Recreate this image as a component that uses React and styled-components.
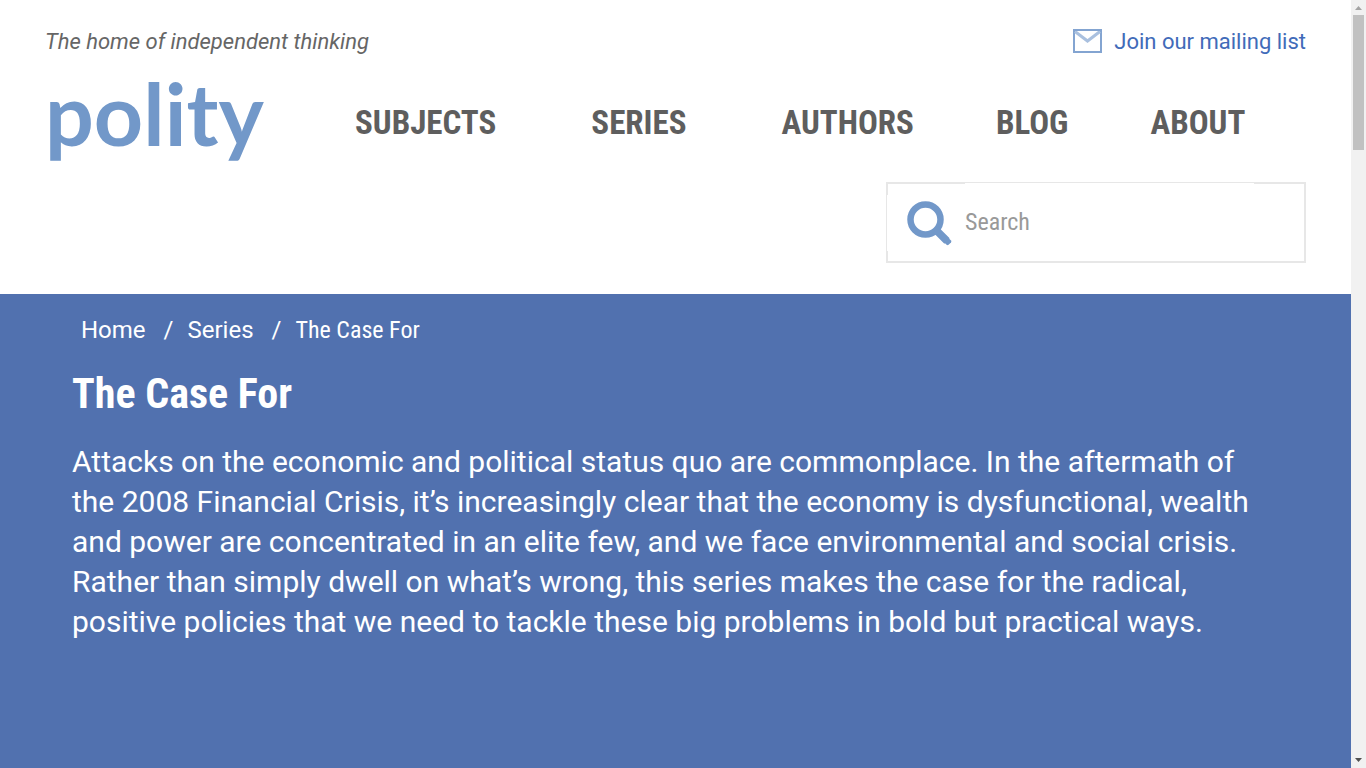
import React, { useState } from 'react';
import styled, { createGlobalStyle } from 'styled-components';

const GlobalStyle = createGlobalStyle`
  * {
    box-sizing: border-box;
  }

  body {
    margin: 0;
    background-color: white;
    font-family: Roboto, 'Liberation Sans', sans-serif;
  }
`;

const condensed = "'Roboto Condensed', Roboto, 'Liberation Sans', sans-serif";

const Window = styled.div`
  display: grid;
  grid-template-columns: minmax(0, 1fr) 15px;
  height: 100vh;
`;

const Page = styled.div`
  display: flex;
  flex-direction: column;
  overflow-y: auto;
  scrollbar-width: none;
`;

const Header = styled.header`
  padding: 24px 45px 31px;
`;

const TopBar = styled.div`
  display: flex;
  align-items: center;
  justify-content: space-between;
  height: 34px;
  font-size: 22px;
`;

const Tagline = styled.em`
  color: #666;
`;

const MailLink = styled.a`
  display: flex;
  align-items: center;
  gap: 12px;
  color: #416bb9;
  text-decoration: none;
`;

const MainBar = styled.div`
  display: flex;
  align-items: center;
  height: 124px;
`;

const Logo = styled.a`
  flex: none;
  width: 310px;
  padding-bottom: 14px;
  color: #7298c9;
  font-family: Lato, 'Open Sans', sans-serif;
  font-size: 86px;
  font-weight: 700;
  line-height: 110px;
  text-decoration: none;
`;

const Nav = styled.nav`
  display: flex;
  padding-top: 6px;
`;

const NavLink = styled.a`
  margin-right: ${(props) => (props.$wide ? '95px' : '82px')};
  color: #5e5e5e;
  font-family: ${condensed};
  font-size: 33px;
  font-weight: 700;
  line-height: 40px;
  text-decoration: none;
  text-transform: uppercase;

  &:last-child {
    margin-right: 0;
  }
`;

const SearchForm = styled.form`
  display: flex;
  align-items: center;
  width: 420px;
  height: 81px;
  margin-left: auto;
  border: 2px solid #e7e7e7;
`;

const SearchButton = styled.button`
  display: flex;
  align-items: center;
  justify-content: center;
  width: 78px;
  height: 56px;
  margin-left: -1px;
  padding: 0 0 0 6px;
  border: 0;
  background-color: white;
  cursor: pointer;
`;

const SearchInput = styled.input`
  align-self: stretch;
  width: 289px;
  margin-top: -1px;
  padding: 0;
  border: 0;
  outline: 0;
  background-color: white;
  color: #5e5e5e;
  font-family: ${condensed};
  font-size: 24px;

  &::placeholder {
    color: #999;
    opacity: 1;
  }
`;

const Banner = styled.main`
  flex: 1 0 auto;
  padding: 16px 72px 96px;
  background-color: #5171af;
  color: white;
`;

const Breadcrumb = styled.ol`
  display: flex;
  margin: 0;
  padding: 0 0 0 9px;
  font-size: 24px;
  line-height: 40px;
  list-style: none;
`;

const Crumb = styled.li`
  & + &::before {
    content: '/';
    padding: 0 14px 0 18px;
  }

  a {
    color: white;
    text-decoration: none;
  }

  span {
    font-family: ${condensed};
  }
`;

const Title = styled.h1`
  margin: 16px 0 20px;
  font-family: ${condensed};
  font-size: 42px;
  font-weight: 700;
  line-height: 56px;
`;

const Description = styled.p`
  max-width: 1180px;
  margin: 0;
  font-size: 30px;
  line-height: 40px;
`;

const Scrollbar = styled.div`
  display: flex;
  flex-direction: column;
  align-items: center;
  justify-content: space-between;
  background-color: #f1f1f1;
`;

const Thumb = styled.div`
  width: 11px;
  height: 135px;
  margin-bottom: auto;
  background-color: #c1c1c1;
`;

const links = [
  { name: 'Subjects', wide: true },
  { name: 'Series', wide: true },
  { name: 'Authors' },
  { name: 'Blog' },
  { name: 'About' },
];

const MailIcon = () => (
  <svg width="29" height="24" viewBox="0 0 29 24" fill="none" aria-hidden="true">
    <rect x="1" y="1" width="27" height="22" stroke="#83a4d1" strokeWidth="2" />
    <path d="M2 2.5L14.5 12L27 2.5" stroke="#a9c0df" strokeWidth="3" />
    <path d="M0 1H29" stroke="#83a4d1" strokeWidth="2" />
  </svg>
);

const SearchIcon = () => (
  <svg width="46" height="46" viewBox="0 0 46 46" fill="none" stroke="#7298c9" aria-hidden="true">
    <circle cx="19.5" cy="19.5" r="15" strokeWidth="6.5" />
    <path d="M29.5 29.5L41 41" strokeWidth="7.5" />
    <path d="M40 35.5L45 40.5Q45.8 41.5 45 42.4L42.6 44.8Q41.6 45.6 40.6 44.8L35.5 40Z" fill="#7298c9" stroke="none" />
  </svg>
);

const App = () => {
  const [search, setSearch] = useState('');

  return (
    <Window>
      <GlobalStyle />
      <Page>
        <Header>
          <TopBar>
            <Tagline>The home of independent thinking</Tagline>
            <MailLink href="#mailing">
              <MailIcon />
              Join our mailing list
            </MailLink>
          </TopBar>
          <MainBar>
            <Logo href="#home">polity</Logo>
            <Nav>
              {links.map((link) => (
                <NavLink key={link.name} href={`#${link.name}`} $wide={link.wide}>
                  {link.name}
                </NavLink>
              ))}
            </Nav>
          </MainBar>
          <SearchForm onSubmit={(e) => e.preventDefault()}>
            <SearchButton type="submit" aria-label="Search">
              <SearchIcon />
            </SearchButton>
            <SearchInput
              type="text"
              aria-label="Search"
              placeholder="Search"
              value={search}
              onChange={(e) => setSearch(e.target.value)}
            />
          </SearchForm>
        </Header>

        <Banner>
          <Breadcrumb>
            <Crumb><a href="#home">Home</a></Crumb>
            <Crumb><a href="#series">Series</a></Crumb>
            <Crumb><span>The Case For</span></Crumb>
          </Breadcrumb>
          <Title>The Case For</Title>
          <Description>
            Attacks on the economic and political status quo are commonplace. In the
            aftermath of the 2008 Financial Crisis, it’s increasingly clear that the
            economy is dysfunctional, wealth and power are concentrated in an elite
            few, and we face environmental and social crisis. Rather than simply
            dwell on what’s wrong, this series makes the case for the radical,
            positive policies that we need to tackle these big problems in bold but
            practical ways.
          </Description>
        </Banner>
      </Page>

      <Scrollbar aria-hidden="true">
        <svg width="15" height="15" viewBox="0 0 15 15">
          <path d="M4 10L7.5 6L11 10Z" fill="#a3a3a3" />
        </svg>
        <Thumb />
        <svg width="15" height="15" viewBox="0 0 15 15">
          <path d="M4 5L7.5 9L11 5Z" fill="#505050" />
        </svg>
      </Scrollbar>
    </Window>
  );
};

export default App;
